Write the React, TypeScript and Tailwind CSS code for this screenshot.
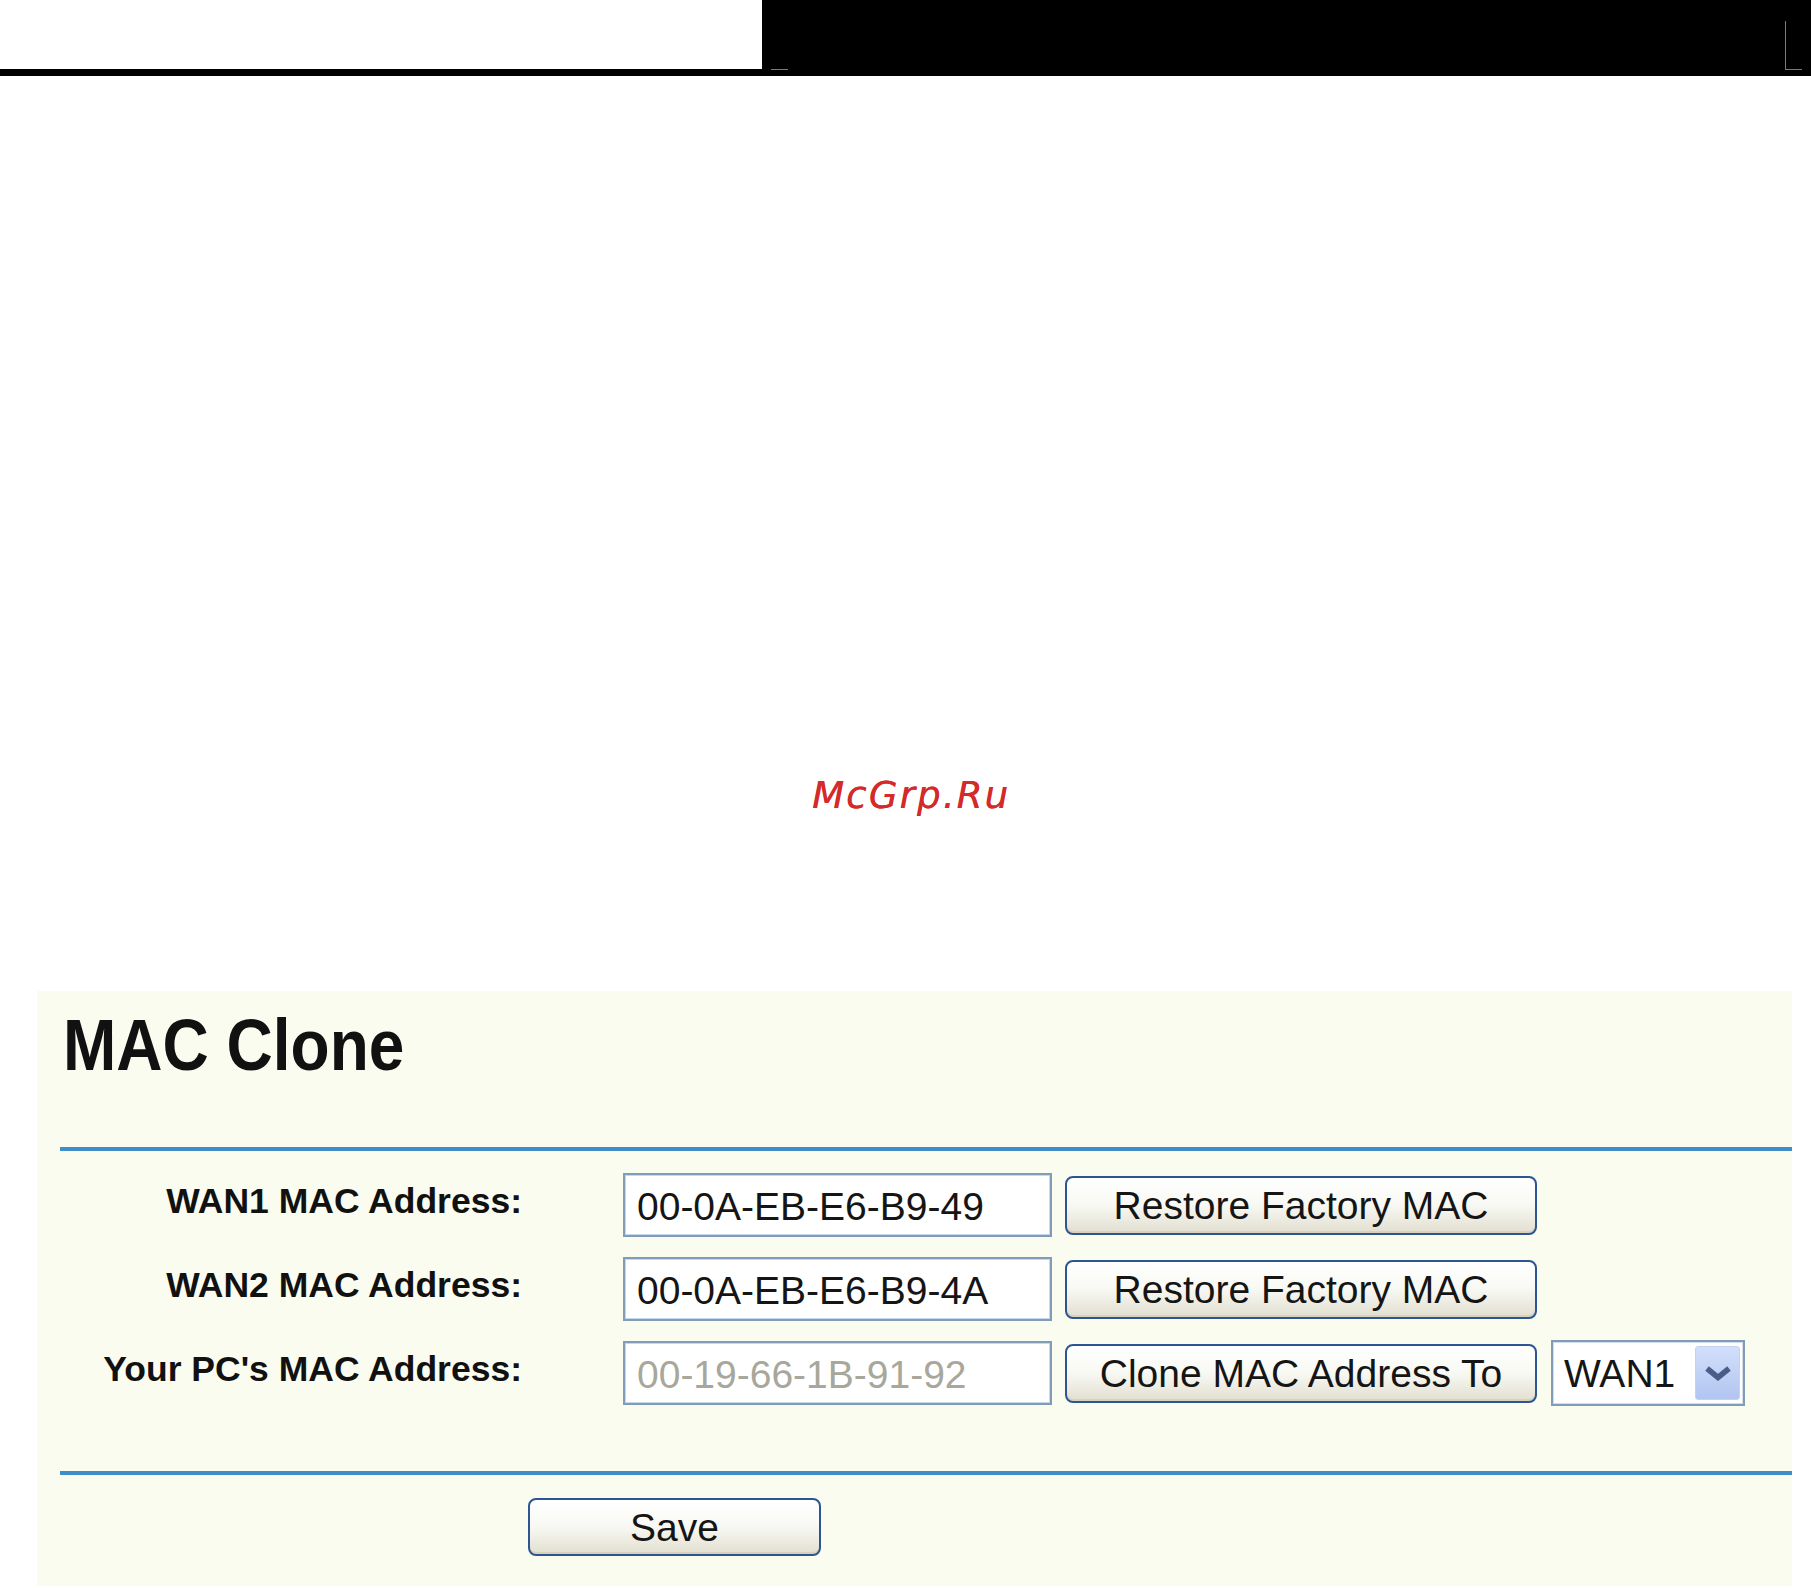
const rows = [
    { label: "WAN1 MAC Address:", value: "00-0A-EB-E6-B9-49", action: "Restore Factory MAC", disabled: false },
    { label: "WAN2 MAC Address:", value: "00-0A-EB-E6-B9-4A", action: "Restore Factory MAC", disabled: false },
    { label: "Your PC's MAC Address:", value: "00-19-66-1B-91-92", action: "Clone MAC Address To", disabled: true },
];

function XpButton({ label, className = "" }: { label: string; className?: string }) {
    return (
        <button
            type="button"
            className={
                "flex items-center justify-center rounded-[8px] border-2 border-[#2d5591] bg-linear-to-b from-white via-[#f8f8f3] to-[#e2dfd0] text-[39px] leading-none text-[#151515] shadow-[inset_0_-2px_0_#d8d2bc] " +
                className
            }
        >
            {label}
        </button>
    );
}

function WanSelect() {
    return (
        <div className="ml-[14px] flex h-[66px] w-[194px] items-center justify-between border-2 border-[#7f9db9] bg-white pl-[11px] pr-[3px] shadow-[inset_0_0_0_1px_#d3deea]">
            <span className="text-[39px] leading-none text-[#151515]">WAN1</span>
            <div className="flex h-[54px] w-[45px] items-center justify-center rounded-[3px] border border-[#c3d2f4] bg-linear-to-b from-[#d3dffb] to-[#b2c5f1]">
                <svg width="28" height="16" viewBox="0 0 28 16">
                    <path d="M3 3.5 L14 12.5 L25 3.5" fill="none" stroke="#4a5d88" strokeWidth="5.5" />
                </svg>
            </div>
        </div>
    );
}

export default function App() {
    return (
        <div className="flex h-[1588px] w-[1811px] flex-col overflow-hidden bg-white font-['Liberation_Sans',Arial,sans-serif]">
            <div className="relative flex h-[76px] shrink-0 bg-black">
                <div className="h-[69px] w-[762px] bg-white" />
                <div className="absolute left-[771px] top-[69px] h-px w-[17px] bg-[#7a7a7a]" />
                <div className="absolute left-[1785px] top-[21px] h-[48px] w-px bg-[#7a7a7a]" />
                <div className="absolute left-[1785px] top-[69px] h-px w-[17px] bg-[#7a7a7a]" />
            </div>

            <p className="mt-[701px] pl-[812px] font-['DejaVu_Sans',sans-serif] text-[37px] italic leading-none tracking-[2.2px] text-[#d42a2a] [text-shadow:0.4px_0_0_#d42a2a]">
                McGrp.Ru
            </p>

            <div className="mb-[2px] ml-[37px] mr-[19px] mt-[177px] flex flex-1 flex-col bg-[#fafcf0] pt-[22px]">
                <h1 className="ml-[26px] origin-center scale-y-[1.12] text-[64px] font-bold leading-none text-[#111]">
                    MAC Clone
                </h1>

                <div className="ml-[23px] mt-[70px] h-[4px] bg-[#3d8ec9]" />

                <div className="mt-[22px] flex flex-col gap-[20px]">
                    {rows.map((row, i) => (
                        <div key={row.label} className="flex h-[64px] items-center">
                            <div className="mt-[-6px] w-[485px] text-right text-[35.5px] font-bold leading-none text-[#111]">
                                {row.label}
                            </div>
                            <input
                                readOnly
                                value={row.value}
                                disabled={row.disabled}
                                className={
                                    "ml-[101px] h-[64px] w-[429px] border-2 border-[#7f9db9] bg-white pl-[12px] pt-[4px] text-[39px] leading-none shadow-[inset_0_0_0_1px_#c9d7e6] outline-none " +
                                    (row.disabled ? "text-[#a7a79b]" : "text-[#151515]")
                                }
                            />
                            <XpButton label={row.action} className="ml-[13px] h-[59px] w-[472px]" />
                            {i === 2 && <WanSelect />}
                        </div>
                    ))}
                </div>

                <div className="ml-[23px] mt-[66px] h-[4px] bg-[#3d8ec9]" />

                <XpButton label="Save" className="ml-[491px] mt-[23px] h-[58px] w-[293px]" />
            </div>
        </div>
    );
}
